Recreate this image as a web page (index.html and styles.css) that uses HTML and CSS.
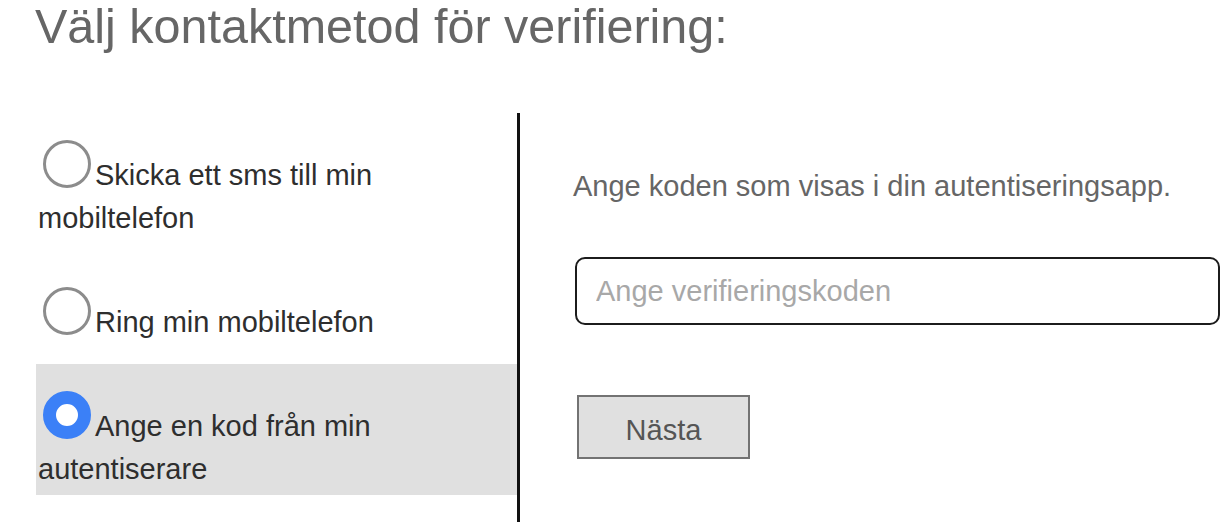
FILE: index.html
```html
<!DOCTYPE html>
<html lang="sv">
<head>
<meta charset="utf-8">
<title>Välj kontaktmetod</title>
<link rel="stylesheet" href="styles.css">
</head>
<body>
<div class="page">
  <h1 class="title">Välj kontaktmetod för verifiering:</h1>
  <div class="columns">
    <div class="options">
      <div class="option"><span class="radio"></span>Skicka ett sms till min mobiltelefon</div>
      <div class="option"><span class="radio"></span>Ring min mobiltelefon</div>
      <div class="option selected"><span class="radio checked"></span>Ange en kod från min autentiserare</div>
    </div>
    <div class="detail">
      <p class="hint">Ange koden som visas i din autentiseringsapp.</p>
      <input class="code" type="text" placeholder="Ange verifieringskoden">
      <button class="next" type="button">Nästa</button>
    </div>
  </div>
</div>
</body>
</html>
```
FILE: styles.css
```css
html, body {
  margin: 0;
  height: 100%;
  overflow: hidden;
  background: #fff;
}
.page {
  height: 100%;
  display: flex;
  flex-direction: column;
  padding-left: 36px;
  box-sizing: border-box;
  font-family: "Liberation Sans", Arial, sans-serif;
}
.title {
  margin: 0 0 0 -1px;
  font-size: 48.5px;
  line-height: 52px;
  font-weight: normal;
  color: #666;
}
.columns {
  flex: 1;
  display: flex;
  margin-top: 61px;
}
.options {
  width: 481px;
  display: flex;
  flex-direction: column;
  gap: 16px;
}
.option {
  padding: 27px 0 4px 2px;
  font-size: 29px;
  line-height: 43px;
  color: #2e2e2e;
}
.option.selected {
  background: #e0e0e0;
}
.radio {
  display: inline-block;
  box-sizing: border-box;
  width: 48px;
  height: 48px;
  margin: 0 4px 0 5px;
  border: 3px solid #8c8c8c;
  border-radius: 50%;
  background: #fff;
  vertical-align: -3px;
}
.radio.checked {
  border: 13px solid #3b80f7;
  background: #fff;
}
.detail {
  flex: 1;
  border-left: 3px solid #111;
  padding-left: 53px;
  display: flex;
  flex-direction: column;
  align-items: flex-start;
}
.hint {
  margin: 52px 0 0 0;
  font-size: 29px;
  line-height: 43px;
  color: #666;
}
.code {
  margin: 49px 0 0 2px;
  width: 645px;
  height: 68px;
  box-sizing: border-box;
  border: 2.5px solid #1c1c1c;
  border-radius: 10px;
  padding: 0 0 0 19px;
  font-family: "Liberation Sans", Arial, sans-serif;
  font-size: 29px;
  color: #333;
  background: #fff;
  outline: none;
}
.code::placeholder {
  color: #a8a8a8;
}
.next {
  margin: 70px 0 0 4px;
  width: 173px;
  height: 64px;
  box-sizing: border-box;
  border: 2.5px solid #737373;
  border-radius: 0;
  background: #e0e0e0;
  font-family: "Liberation Sans", Arial, sans-serif;
  font-size: 29px;
  color: #555;
  padding: 7px 0 0 0;
}
```
